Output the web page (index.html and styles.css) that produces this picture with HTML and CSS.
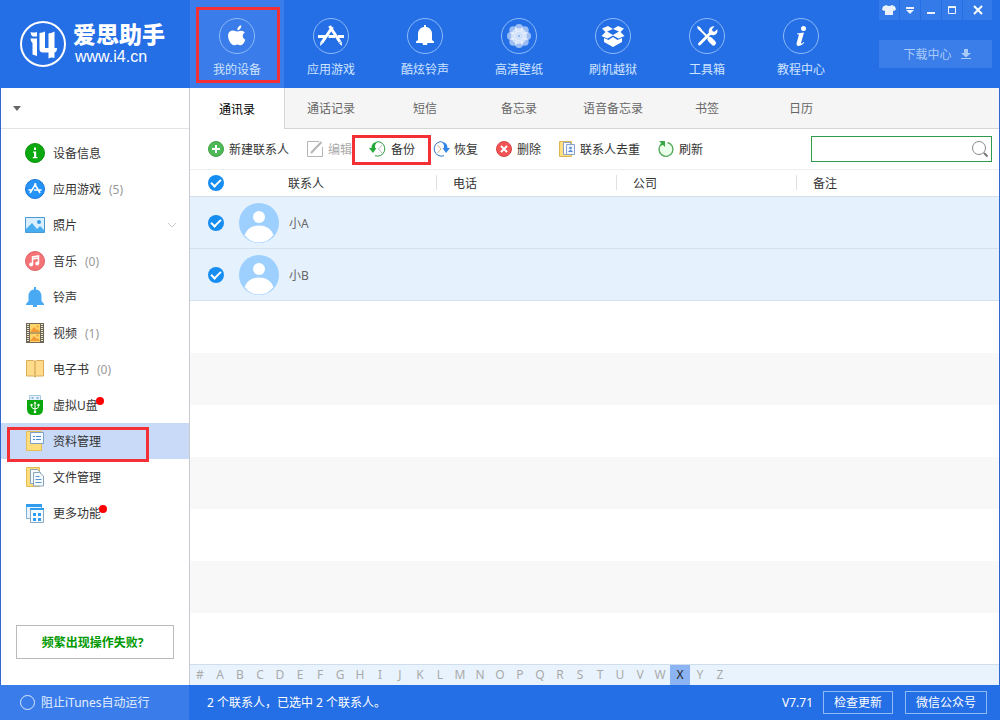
FILE: index.html
```html
<!DOCTYPE html>
<html lang="zh-CN">
<head>
<meta charset="utf-8">
<title>爱思助手</title>
<link rel="stylesheet" href="styles.css">
</head>
<body>
<div class="app">
  <header class="header">
    <div class="brand">
      <svg class="brand-mark" viewBox="0 0 46 46" aria-hidden="true">
        <circle cx="23" cy="23" r="22" fill="none" stroke="#fff" stroke-width="2"/>
        <path fill="#fff" d="M10.500 11q3 1 6.500 0v4.500h-4q-2-.5-2.500-4.500zM10.500 17.500H17V35l-4.500-1.500V22q-2-1-2-4.500zM19.500 12q3-.5 5.500-1.500V27h3.500V12.500q3.500-.5 6-2V27h2.500q0 4-2.500 4.500V37q-3-1-6 .5v-6H23q-3.500 0-3.500-3.500z"/>
      </svg>
      <div class="brand-text">
        <div class="brand-name">爱思助手</div>
        <div class="brand-url">www.i4.cn</div>
      </div>
    </div>
    <nav class="nav">
      <button class="nav-item active">
        <svg viewBox="0 0 36 36" aria-hidden="true"><circle class="ring" cx="18" cy="18" r="17.500"/><path fill="#fff" d="M18.300 12.300c-.2-2.500 1.700-4.800 4-5.100.3 2.600-1.800 5-4 5.100zM22.300 12.700c1.500 0 2.700.8 3.500 1.900-3 1.900-2.600 5.900.5 7.200-.8 2.500-2.600 5.400-4.500 5.400-1.400 0-1.900-.8-3.500-.8s-2.100.8-3.400.8c-2.500 0-5.800-5-5.800-9.200 0-3.800 2.400-5.500 4.800-5.500 1.600 0 3 1 3.900 1s2.600-.8 4.500-.8z"/></svg>
        <span>我的设备</span>
      </button>
      <button class="nav-item">
        <svg viewBox="0 0 36 36" aria-hidden="true"><circle class="ring" cx="18" cy="18" r="17.500"/><path fill="none" stroke="#fff" stroke-width="3" d="M5 18.500h7M15.500 18.500h6.500M25 18.500h6M19.500 9L9 24.500M16.500 8l10.500 16"/><path fill="#fff" d="M7.500 23.500l2.500 1.700L7 28zM26 25.200l2.700-1.700.3 4.500z"/></svg>
        <span>应用游戏</span>
      </button>
      <button class="nav-item">
        <svg viewBox="0 0 36 36" aria-hidden="true"><circle class="ring" cx="18" cy="18" r="17.500"/><path fill="#fff" d="M17 9V7h2v2c4 .5 6 3.500 6 7v6l2 1.500V25h-6.500l-.5 2h-4l-.5-2H9v-1.500l2-1.500v-6c0-3.500 2-6.500 6-7z"/></svg>
        <span>酷炫铃声</span>
      </button>
      <button class="nav-item">
        <svg viewBox="0 0 36 36" aria-hidden="true"><circle class="ring" cx="18" cy="18" r="17.500"/><g fill="#fff" fill-opacity=".55"><circle cx="18" cy="10" r="4"/><circle cx="23.700" cy="12.300" r="4"/><circle cx="26" cy="18" r="4"/><circle cx="23.700" cy="23.700" r="4"/><circle cx="18" cy="26" r="4"/><circle cx="12.300" cy="23.700" r="4"/><circle cx="10" cy="18" r="4"/><circle cx="12.300" cy="12.300" r="4"/><circle cx="18" cy="18" r="8"/><circle cx="18" cy="18" r="5"/></g><circle cx="18" cy="18" r="1" fill="#7fb0f5"/></svg>
        <span>高清壁纸</span>
      </button>
      <button class="nav-item">
        <svg viewBox="0 0 36 36" aria-hidden="true"><circle class="ring" cx="18" cy="18" r="17.500"/><path fill="#fff" d="M7 10.500L13 8l5 3 5-3 6 2.500-3.500 3.500 4 4-6 2.500-5.500-3-5.500 3-6-2.500 4-4zM12 13.500l6 3.500 6-3.500-6-2.500zM9 20l4.500 2 4.500-3 4.500 3 4.500-2v4l-9 5-9-5z" fill-rule="evenodd"/></svg>
        <span>刷机越狱</span>
      </button>
      <button class="nav-item">
        <svg viewBox="0 0 36 36" aria-hidden="true"><circle class="ring" cx="18" cy="18" r="17.500"/><path fill="none" stroke="#fff" stroke-width="3" stroke-linecap="round" d="M10.500 26l11-11"/><path fill="none" stroke="#fff" stroke-width="2" d="M9 9.500l11 11"/><path fill="none" stroke="#fff" stroke-width="5" stroke-linecap="round" d="M21 21.500l3.500 3.500"/><path fill="#fff" d="M8 8l3 1 2 3-1 1-3-2zM25.500 8.200l-2.500 3 .5 2 2 .5 2.800-2.500c.8 3.500-1.300 6-4.300 6-3.500 0-5-3-4-5.500.8-2.500 3-3.900 5.500-3.500z"/></svg>
        <span>工具箱</span>
      </button>
      <button class="nav-item">
        <svg viewBox="0 0 36 36" aria-hidden="true"><circle class="ring" cx="18" cy="18" r="17.500"/><circle cx="20.500" cy="10.500" r="2.500" fill="#fff"/><path fill="#fff" d="M14 15.500l7-1-3 10.500q0 1.500 2.800-1l.5.8Q18 28.500 15 28q-2-.5-1.200-3.500l2.200-8-2-.2z"/></svg>
        <span>教程中心</span>
      </button>
    </nav>
    <div class="header-side">
      <div class="window-controls">
        <button aria-label="皮肤"><svg width="14" height="12" viewBox="0 0 14 12"><path fill="#fff" fill-opacity=".9" d="M4 1q3 2 6 0l3 1.500 1 3-2 1.500-1-.5V11H3V6.500L2 7 0 5.500l1-3z"/></svg></button>
        <button aria-label="菜单"><svg width="10" height="10" viewBox="0 0 10 10"><path fill="#fff" fill-opacity=".9" d="M1 2h8v2H1zM1 5h8L5 9z"/></svg></button>
        <button aria-label="最小化"><svg width="10" height="10" viewBox="0 0 10 10"><path fill="#fff" fill-opacity=".9" d="M1 7h8v2H1z"/></svg></button>
        <button aria-label="最大化"><svg width="10" height="10" viewBox="0 0 10 10"><path fill="none" stroke="#fff" stroke-opacity=".9" d="M1.500 1.500h7v7h-7zM1 2.500h8"/></svg></button>
        <button class="close" aria-label="关闭"><svg width="10" height="10" viewBox="0 0 10 10"><path fill="none" stroke="#fff" stroke-width="2" d="M1 1l8 8M9 1L1 9"/></svg></button>
      </div>
      <button class="download"><span>下载中心</span><svg width="12" height="12" viewBox="0 0 12 12" aria-hidden="true"><path fill="currentColor" d="M4 1h4v4h3L6 9.500 1 5h3zM1 10h10v1H1z"/></svg></button>
    </div>
  </header>

  <div class="body">
    <aside class="sidebar">
      <button class="device" aria-label="选择设备"><svg width="8" height="5" viewBox="0 0 8 5"><path fill="#666" d="M0 0h8L4 5z"/></svg></button>
      <nav class="menu">
        <a class="menu-item" href="#"><svg viewBox="0 0 20 20"><circle cx="10" cy="10" r="9.500" fill="#0ca810" stroke="#079009"/><path fill="#fff" d="M9 4.500h2v2.500H9zM8 8.500h3.200v5.500H12.500v1.200H7.800V14H9V9.700H8z"/></svg><span>设备信息</span></a>
        <a class="menu-item" href="#"><svg viewBox="0 0 20 20"><circle cx="10" cy="10" r="9.500" fill="#2592f8" stroke="#1775d8"/><path fill="none" stroke="#fff" stroke-width="1.500" d="M3.500 11h4M9 11h3.500M14 11h2.500M11 4.500L5 14M9.500 4.500L15 14"/></svg><span>应用游戏</span><span class="count">(5)</span></a>
        <a class="menu-item" href="#"><svg viewBox="0 0 20 20"><path fill="#d9eefe" stroke="#4c9ad4" d="M.5 2.500h19v15H.5z"/><circle cx="14" cy="7" r="2" fill="#359fe8"/><path fill="#45adf0" d="M1 14l6-6 5 6 3-3 4 4v2H1z"/></svg><span>照片</span><svg class="chevron" viewBox="0 0 10 6"><path fill="none" stroke="#ccc" d="M1 1l4 4 4-4"/></svg></a>
        <a class="menu-item" href="#"><svg viewBox="0 0 20 20"><circle cx="10" cy="10" r="9.500" fill="#f57376" stroke="#dc6467"/><path fill="none" stroke="#fff" stroke-width="1.500" d="M7.500 13.500V6l6-1v7.500M7.500 8l6-1"/><circle cx="6.200" cy="13.500" r="1.900" fill="#fff"/><circle cx="12.200" cy="12.500" r="1.900" fill="#fff"/></svg><span>音乐</span><span class="count">(0)</span></a>
        <a class="menu-item" href="#"><svg viewBox="0 0 20 20"><path fill="#49aaf3" d="M9 2.500V0h2v2.500c4 .5 5.500 3.500 5.500 7V14l2.500 3v1h-7v2H8v-2H1v-1l2.500-3V9.500c0-3.500 1.500-6.500 5.500-7z"/></svg><span>铃声</span></a>
        <a class="menu-item" href="#"><svg viewBox="0 0 20 20"><path fill="#ffd46a" stroke="#776951" d="M1.500.5h17v19h-17z"/><path fill="#6b6657" d="M1 0h4v20H1zM15 0h4v20h-4z"/><path fill="none" stroke="#f3ead2" stroke-width="2" stroke-dasharray="1 1" d="M3 1v18M17 1v18"/><path stroke="#776951" d="M4 10h12"/><path fill="#f39a35" d="M5 9l4-5 3 3 1-1 2 3zM5 18l4-5 3 3 1-1 2 3z"/><circle cx="12.500" cy="3.500" r="1" fill="#f39a35"/><circle cx="12.500" cy="12.500" r="1" fill="#f39a35"/></svg><span>视频</span><span class="count">(1)</span></a>
        <a class="menu-item" href="#"><svg viewBox="0 0 20 20"><path fill="#ffdb8b" stroke="#d8ac58" d="M1.500 1.500h7l1.500 1 1.500-1h7v15.500h-7L10 18l-1.500-1h-7z"/><path stroke="#c99c46" d="M10 2v16"/></svg><span>电子书</span><span class="count">(0)</span></a>
        <a class="menu-item" href="#"><svg viewBox="0 0 20 20"><path fill="#e5f2fb" stroke="#a9cbe0" d="M4.500.5h11V6h-11z"/><path fill="#8fb8dc" d="M6.500 2h2v2h-2zM11.500 2h2v2h-2z"/><path fill="#0aa80e" d="M2 5h16v9q0 6-6 6H8q-6 0-6-6z"/><path fill="none" stroke="#fff" d="M10 7.500v9.500M6.500 10v1.500q0 2 3.500 2.500 3.500-.5 3.500-2.500V10"/><path fill="#fff" d="M8.500 8.500L10 6.500l1.500 2zM5.500 9h2v2h-2zM12.500 9h2v2h-2z"/><circle cx="10" cy="17" r="1.300" fill="#fff"/></svg><span class="flagged">虚拟U盘</span></a>
        <a class="menu-item selected" href="#"><svg viewBox="0 0 20 20"><path fill="#ffdd7d" stroke="#e5bd57" d="M1.500.5h15v19h-15z"/><path fill="#f6fbff" stroke="#7d9fc4" d="M5.500 1.500h13v11h-13z"/><path stroke="#4a8bd4" d="M8 5.500h2M11 5.500h5M8 8.500h2M11 8.500h5"/></svg><span>资料管理</span></a>
        <a class="menu-item" href="#"><svg viewBox="0 0 20 20"><path fill="#ffdd7d" stroke="#e5bd57" d="M1.500.5h13v19h-13z"/><path fill="#f6fbff" stroke="#8aa4bd" d="M5.500 2.500h7l3 3v11h-10z"/><path fill="#f6fbff" stroke="#8aa4bd" d="M8.500 5.500h6l4 3.500v10h-10z"/><path stroke="#5a94d0" d="M10.500 9.500h4M10.500 12.500h6M10.500 15.500h6"/></svg><span>文件管理</span></a>
        <a class="menu-item" href="#"><svg viewBox="0 0 20 20"><path fill="#e7f4fd" stroke="#7daed6" d="M1.500 1.500h15v14h-15z"/><path fill="#329cee" d="M1 1h16v3H1z"/><path fill="#f6fbff" stroke="#88a8c5" d="M5.500 5.500h13v14h-13z"/><path fill="#329cee" d="M5 5h14v2H5zM8 10h3v3H8zM13 10h3v3h-3zM8 15h3v3H8zM13 15h3v3h-3z"/></svg><span class="flagged">更多功能</span></a>
        <span class="marker marker-menu"></span>
      </nav>
      <button class="help">频繁出现操作失败?</button>
    </aside>

    <main class="main">
      <nav class="tabs">
        <button class="tab active">通讯录</button>
        <button class="tab">通话记录</button>
        <button class="tab">短信</button>
        <button class="tab">备忘录</button>
        <button class="tab">语音备忘录</button>
        <button class="tab">书签</button>
        <button class="tab">日历</button>
      </nav>
      <div class="toolbar">
        <button class="tool"><svg viewBox="0 0 16 16"><circle cx="8" cy="8" r="7.500" fill="#50b957" stroke="#3da346"/><path stroke="#fff" stroke-width="2" d="M8 4v8M4 8h8"/></svg><span>新建联系人</span></button>
        <button class="tool" disabled><svg viewBox="0 0 16 16"><path fill="none" stroke="#b5b5b5" d="M12 .5H.5v15h15V6"/><path stroke="#b5b5b5" stroke-width="2" d="M4 12l10.500-11"/></svg><span>编辑</span></button>
        <button class="tool marked"><svg viewBox="0 0 16 16"><path fill="none" stroke="#2f9b42" d="M9 .7a7.300 7.300 0 1 1-4 14M9 .7q-2 0-3 .8"/><path fill="#25a936" d="M7 1Q1.500 1.500 1.500 7H-1l4 5 3.500-5H5Q4.500 3.500 7 1z"/><path fill="none" stroke="#bbb" d="M12 4L8.500 8l3.500 4"/></svg><span>备份</span></button>
        <button class="tool"><svg viewBox="0 0 16 16"><path fill="none" stroke="#3578cb" d="M7 .7a7.300 7.300 0 1 0 4 14M7 .7q2 0 3 .8"/><path fill="#3186e8" d="M9 1q5.500.5 5.500 6H17l-4 5-3.500-5H11Q11.500 3.500 9 1z"/><path fill="none" stroke="#d0b58e" d="M4.500 4L8 8l-3.500 4"/></svg><span>恢复</span></button>
        <button class="tool"><svg viewBox="0 0 16 16"><circle cx="8" cy="8" r="7.500" fill="#f25354" stroke="#d84546"/><path stroke="#fff" stroke-width="2" d="M5 5l6 6M11 5l-6 6"/></svg><span>删除</span></button>
        <button class="tool"><svg viewBox="0 0 16 16"><path fill="#ffdf82" stroke="#dbb653" d="M.5.5h12v15H.5z"/><path fill="#fff" stroke="#8ba3cb" d="M4.500 1.500h7v12h-7z"/><path fill="#eff5ff" stroke="#8ba3cb" d="M7.500 3.500h8v10h-8z"/><circle cx="11.500" cy="7" r="1.300" fill="#5685d1"/><path fill="#5685d1" d="M9 11q2.500-4 5 0z"/></svg><span>联系人去重</span></button>
        <button class="tool"><svg viewBox="0 0 16 16"><circle cx="8" cy="8.500" r="6.500" fill="#eaffea"/><path fill="none" stroke="#55a95b" stroke-width="1.400" d="M9.500 1.500a7 7 0 1 1-6 1.500"/><path fill="#38a943" d="M1 0h6v6L5 4 2 5l1-3z"/></svg><span>刷新</span></button>
        <label class="search"><input type="text" aria-label="搜索"><svg viewBox="0 0 16 16" aria-hidden="true"><circle cx="7" cy="7" r="6.500" fill="none" stroke="#888"/><path stroke="#777" stroke-width="2" d="M12 12l3.500 3.500"/></svg></label>
      </div>
      <div class="list">
        <table class="contacts">
          <colgroup><col class="col-check"><col class="col-name"><col class="col-mid"><col class="col-mid"><col></colgroup>
          <thead>
            <tr><th><input type="checkbox" aria-label="全选" checked></th><th class="name-head">联系人</th><th>电话</th><th>公司</th><th>备注</th></tr>
          </thead>
          <tbody>
            <tr><td><input id="a" type="checkbox" checked></td><td><label class="person" for="a"><svg viewBox="0 0 40 40"><circle cx="20" cy="20" r="20" fill="#9dd0ff"/><circle cx="20" cy="14" r="6" fill="#fff"/><path fill="#fff" d="M5.500 32Q9 22.500 20 22.500T34.500 32Q29 39.500 20 39.500T5.500 32z"/></svg><span>小A</span></label></td><td></td><td></td><td></td></tr>
            <tr><td><input id="b" type="checkbox" checked></td><td><label class="person" for="b"><svg viewBox="0 0 40 40"><circle cx="20" cy="20" r="20" fill="#9dd0ff"/><circle cx="20" cy="14" r="6" fill="#fff"/><path fill="#fff" d="M5.500 32Q9 22.500 20 22.500T34.500 32Q29 39.500 20 39.500T5.500 32z"/></svg><span>小B</span></label></td><td></td><td></td><td></td></tr>
          </tbody>
        </table>
      </div>
      <div class="letters">
        <span>#</span><span>A</span><span>B</span><span>C</span><span>D</span><span>E</span><span>F</span><span>G</span><span>H</span><span>I</span><span>J</span><span>K</span><span>L</span><span>M</span><span>N</span><span>O</span><span>P</span><span>Q</span><span>R</span><span>S</span><span>T</span><span>U</span><span>V</span><span>W</span><span class="current">X</span><span>Y</span><span>Z</span>
      </div>
    </main>
  </div>

  <footer class="footer">
    <label class="itunes"><input type="radio">阻止iTunes自动运行</label>
    <div class="status">
      <span class="summary">2 个联系人，已选中 2 个联系人。</span>
      <span>V7.71</span>
      <button class="update">检查更新</button>
      <button class="wechat">微信公众号</button>
    </div>
  </footer>
</div>
</body>
</html>
```
FILE: styles.css
```css
* { box-sizing: border-box; }
body {
  margin: 0;
  font: 12px/18px "Noto Sans", "Noto Sans CJK SC", sans-serif;
  color: #333;
}
button, input { font: inherit; color: inherit; }
button { border: 0; padding: 0; background: none; }
svg { display: block; flex: none; overflow: visible; }
.app { display: flex; flex-direction: column; height: 100vh; background: #fff; }

/* Header */
.header { display: flex; height: 88px; background: #246ee6; color: #cfe4ff; }
.brand {
  display: flex; align-items: center; gap: 7px; width: 190px; padding-left: 20px;
  color: #fff; font-family: "Liberation Sans", "Noto Sans CJK SC", sans-serif;
}
.brand-mark { width: 46px; height: 46px; }
.brand-name { font-size: 23px; line-height: 26px; font-weight: 900; white-space: nowrap; }
.brand-url { padding-left: 2px; font-size: 16px; line-height: 18px; }
.nav { display: flex; }
.nav-item {
  display: flex; flex-direction: column; align-items: center; gap: 7px;
  position: relative; width: 94px; padding-top: 18px;
}
.nav-item svg { width: 36px; height: 36px; }
.nav-item.active { background: #3a7ce9; }
.nav-item.active::after, .marked::after, .marker {
  content: ""; position: absolute; border: 3px solid #f23035; pointer-events: none;
}
.nav-item.active::after { inset: 7px 4px 5px 6px; }
.ring { fill: none; stroke: #8dbbf8; }
.header-side { display: flex; flex-direction: column; gap: 20px; width: 113px; margin: 0 8px 0 auto; }
.window-controls { display: flex; gap: 1px; }
.window-controls button { display: grid; place-items: center; width: 20px; height: 20px; background: #347ae8; }
.window-controls .close { flex: 1; }
.download {
  display: flex; align-items: center; justify-content: center; gap: 8px;
  height: 28px; padding-left: 4px; background: #3b7de9; color: #a9cbf8;
}

/* Sidebar */
.body { display: flex; flex: 1; min-height: 0; border: solid #2f68cf; border-width: 0 1px; }
.sidebar { display: flex; flex-direction: column; width: 189px; border-right: 1px solid #c6cbd2; }
.device { display: flex; align-items: center; height: 41px; padding-left: 12px; border-bottom: 1px solid #e3e3e3; }
.menu { position: relative; padding-top: 6px; }
.menu-item {
  display: flex; align-items: center; gap: 8px;
  height: 36px; padding: 0 12px 0 24px; color: #333; text-decoration: none;
}
.menu-item svg { width: 20px; height: 20px; }
.menu-item span, .tool span, .person span, .download span { padding-top: 2px; }
.menu-item .chevron { width: 10px; height: 6px; margin-left: auto; }
.selected { background: #c9daf8; }
.menu-item .count { color: #999; }
.flagged { position: relative; }
.flagged::after {
  content: ""; position: absolute; top: 2px; right: -6px;
  width: 8px; height: 8px; border-radius: 50%; background: #f00;
}
.marker-menu { left: 6px; top: 298px; width: 142px; height: 35px; }
.help {
  height: 34px; margin: auto 15px 26px; padding: 2px 5px 0 0; border: 1px solid #bbb;
  color: #090; font-weight: bold;
}

/* Main area */
.main { display: flex; flex-direction: column; flex: 1; min-width: 0; }
.tabs { display: flex; height: 41px; background: #f5f5f5; border-bottom: 1px solid #d5d5d5; }
.tab { width: 94px; padding-top: 2px; color: #666; }
.tab.active { width: 95px; height: 41px; margin-right: -1px; border-right: 1px solid #d5d5d5; background: #fff; color: #000; }
.toolbar { display: flex; align-items: center; gap: 18px; height: 41px; padding: 0 7px 0 18px; border-bottom: 1px solid #efefef; }
.tool { display: flex; align-items: center; gap: 5px; position: relative; white-space: nowrap; }
.tool svg { width: 16px; height: 16px; }
.tool:disabled { color: #aaa; }
.marked::after { inset: -4px -16px -6px -18px; }
.search { display: flex; align-items: center; width: 181px; height: 26px; margin-left: auto; padding-right: 3px; border: 1px solid #2f9a4b; }
.search input { flex: 1; min-width: 0; height: 24px; border: 0; background: none; outline: 0; }
.search svg { width: 16px; height: 16px; }

/* Contact list */
.list {
  flex: 1; min-height: 0; overflow: hidden;
  background: repeating-linear-gradient(#fff 0 52px, #f8f8f8 52px 104px) 0 27px no-repeat;
}
.contacts { width: 100%; table-layout: fixed; border-collapse: separate; border-spacing: 0; }
.col-check { width: 48px; }
.col-name { width: 199px; }
.col-mid { width: 180px; }
.contacts th {
  height: 27px; padding: 2px 0 0 16px; text-align: left; font-weight: normal;
  border-bottom: 1px solid #d5dfe9;
  background: linear-gradient(#e0e0e0, #e0e0e0) right 5px / 1px 15px no-repeat #fff;
}
.contacts th:first-child, .contacts th:last-child { background: #fff; }
.contacts .name-head { padding-left: 50px; }
.contacts td { height: 52px; padding: 0; background: #e5f1fd; border-bottom: 1px solid #d3e0ed; color: #666; }
.contacts th:first-child, .contacts td:first-child { padding: 0 0 0 18px; }
.contacts input {
  display: grid; place-items: center; width: 16px; height: 16px; margin: 0;
  appearance: none; border-radius: 50%; background: #168df0;
}
.contacts input::after {
  content: ""; width: 8px; height: 4px; margin-bottom: 2px;
  border: solid #fff; border-width: 0 0 2px 2px; rotate: -45deg;
}
.person { display: flex; align-items: center; gap: 10px; padding-left: 1px; }
.person svg { width: 40px; height: 40px; }
.letters { display: flex; height: 21px; background: #e9f3fd; border-top: 1px solid #cfdded; color: #aaa; }
.letters span { width: 20px; text-align: center; line-height: 20px; }
.letters .current { background: #8db4f2; color: #222; }

/* Footer */
.footer { display: flex; height: 35px; background: #246ee6; color: #fff; }
.itunes { display: flex; align-items: center; gap: 6px; width: 189px; padding-left: 20px; background: #3a7ce9; color: #e2efff; }
.itunes input { width: 15px; height: 15px; margin: 0; appearance: none; border: 1px solid #dceaff; border-radius: 50%; }
.status { display: flex; flex: 1; align-items: center; padding: 0 13px 0 18px; }
.summary { margin-right: auto; }
.status button { height: 23px; border: 1px solid #8fbaf6; }
.update { width: 70px; margin: 0 12px 0 10px; }
.wechat { width: 82px; }
```
